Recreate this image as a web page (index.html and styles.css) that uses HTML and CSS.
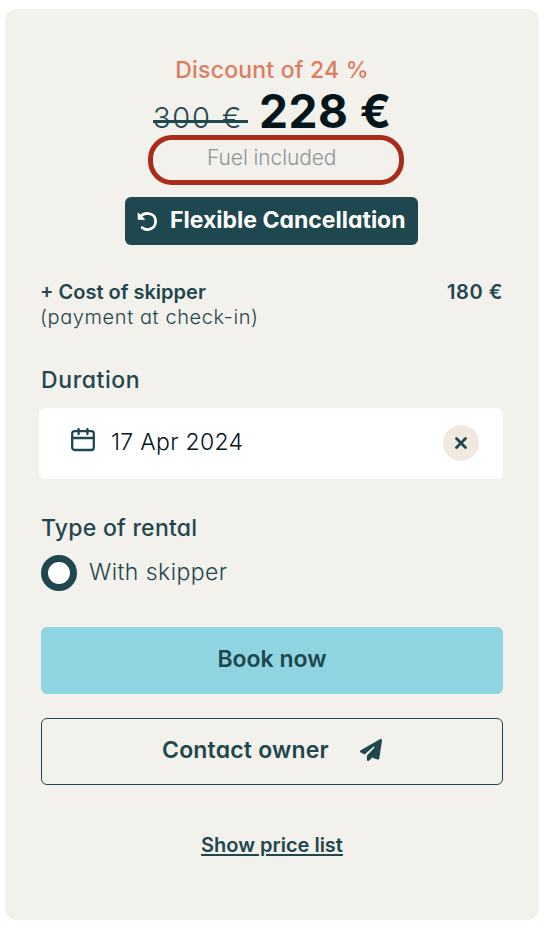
FILE: index.html
```
<!DOCTYPE html>
<html lang="en">
<head>
<meta charset="UTF-8">
<meta name="viewport" content="width=device-width, initial-scale=1.0">
<title>Booking</title>
<link rel="stylesheet" href="styles.css">
</head>
<body>

<div class="booking">
    <div class="discount">Discount of 24 %</div>
    <div class="price">
        <span class="price-old">300 €</span>
        <span class="price-new">228 €</span>
    </div>
    <div class="fuel">Fuel included</div>
    <div class="cancellation">
        <svg width="22" height="22" viewBox="0 0 22 22" fill="none">
            <path d="M4.5 6.4C9 1.4 19.6 2.6 19.6 11.2C19.6 18.6 11.4 22 6.2 17.6" stroke="#fff" stroke-width="2.7" stroke-linecap="round"/>
            <path d="M2.2 2.9v6.4h6.4z" fill="#fff" stroke="#fff" stroke-width="1" stroke-linejoin="round"/>
        </svg>
        <span class="cancellation-text">Flexible Cancellation</span>
    </div>

    <div class="cost">
        <div>
            <div class="cost-name">+ Cost of skipper</div>
            <div class="cost-note">(payment at check-in)</div>
        </div>
        <div class="cost-value">180 €</div>
    </div>

    <div class="label label-duration">Duration</div>
    <div class="date">
        <svg width="24" height="24" viewBox="0 0 24 24" fill="none" stroke="#1f474f" stroke-width="2.3" stroke-linecap="round">
            <rect x="1.2" y="3.2" width="21.6" height="18.8" rx="2.5"/>
            <path d="M1.2 10h21.6M7.6 1v5.2M16.4 1v5.2"/>
        </svg>
        <span class="date-value">17 Apr 2024</span>
        <button class="date-clear" aria-label="Clear">
            <svg width="12" height="12" viewBox="0 0 12 12" stroke="#1f474f" stroke-width="2.8" stroke-linecap="round">
                <path d="M1.5 1.5l9 9M10.5 1.5l-9 9"/>
            </svg>
        </button>
    </div>

    <div class="label label-type">Type of rental</div>
    <div class="radio">
        <span class="radio-mark"></span>
        <span class="radio-text">With skipper</span>
    </div>

    <button class="button button-book">Book now</button>
    <button class="button button-contact">
        <span>Contact owner</span>
        <svg width="22" height="22" viewBox="0 0 512 512" fill="#1f474f">
            <path d="M498 6c10 7 16 18 14 31l-64 416c-2 10-8 18-16 23s-19 6-28 2l-120-50-68 74c-9 10-23 13-36 8s-20-17-20-30v-84c0-4 2-8 4-11l168-183c6-6 5-16 0-22s-15-6-22-1L106 360l-88-44C7 311 0 300 0 288s6-23 16-29L464 3c11-6 24-5 34 3z"/>
        </svg>
    </button>
    <div class="links"><a class="price-list" href="#">Show price list</a></div>
</div>

</body>
</html>
```
FILE: styles.css
```
* {
    box-sizing: border-box;
}

body {
    margin: 0;
    background: #fff;
    color: #1f474f;
    font-family: Inter, "Noto Sans", sans-serif;
    font-feature-settings: "cv11";
    font-size: 23px;
    white-space: nowrap;
}

button {
    padding: 0;
    border: none;
    color: inherit;
    font: inherit;
    font-feature-settings: inherit;
    cursor: pointer;
}

svg {
    display: block;
    flex: none;
}

.booking {
    width: 534px;
    height: 911px;
    margin: 9px 0 0 5px;
    padding: 45px 36px 0;
    background: #f3f1eb;
    border-radius: 12px;
    display: flow-root;
}

.discount {
    line-height: 32px;
    color: #de7c61;
    font-weight: 500;
    letter-spacing: 0.2px;
    text-align: center;
}

.price {
    display: flex;
    align-items: baseline;
    height: 49px;
    padding-left: 112px;
    line-height: 50px;
}

.price-old {
    position: relative;
    width: 95px;
    font-size: 29px;
    font-weight: 300;
    letter-spacing: 1.8px;
}

/* strike runs a little past the amount */
.price-old::after {
    content: "";
    position: absolute;
    left: 0;
    right: 0;
    top: 27px;
    height: 3px;
    background: #1f474f;
}

.price-new {
    margin-left: 11px;
    color: #04151b;
    font-size: 46px;
    font-weight: 700;
    letter-spacing: 0.5px;
}

.fuel {
    width: 256px;
    height: 50px;
    margin-left: 107px;
    padding-left: 54px;
    border: 5px solid #a92b18;
    border-radius: 24px;
    color: #8c9696;
    font-size: 21px;
    font-weight: 300;
    letter-spacing: -0.1px;
    line-height: 36px;
}

.cancellation {
    display: flex;
    align-items: center;
    gap: 12px;
    width: 293px;
    height: 48px;
    margin: 12px 0 0 84px;
    padding-left: 11px;
    border-radius: 6px;
    background: #1f474f;
    color: #fff;
    font-weight: 700;
}

.cancellation-text {
    height: 48px;
    line-height: 47px;
}

.cost {
    display: flex;
    justify-content: space-between;
    margin-top: 34px;
    font-size: 20px;
    line-height: 26px;
}

.cost-name,
.cost-value {
    font-weight: 600;
}

.cost-name {
    margin-left: -1px;
}

.cost-value {
    letter-spacing: 0.6px;
}

.cost-note {
    margin-left: -1px;
    line-height: 25px;
    font-weight: 300;
    letter-spacing: 0.6px;
}

.label {
    font-weight: 500;
    line-height: 30px;
}

.label-duration {
    margin-top: 35px;
    letter-spacing: 0.6px;
}

.date {
    display: flex;
    align-items: center;
    height: 71px;
    margin: 13px 0 0 -2px;
    padding: 0 24px 0 32px;
    border-radius: 6px;
    background: #fff;
}

.date > svg {
    margin-bottom: 7px;
}

.date-value {
    margin-left: 16px;
    padding-bottom: 3px;
    color: #04151b;
    font-weight: 300;
    letter-spacing: 0.3px;
}

.date-clear {
    display: flex;
    align-items: center;
    justify-content: center;
    width: 36px;
    height: 36px;
    margin: 0 0 1px auto;
    border-radius: 50%;
    background: #f1e9df;
}

.label-type {
    margin-top: 34px;
    letter-spacing: 0.25px;
}

.radio {
    display: flex;
    gap: 12px;
    margin-top: 12px;
    font-weight: 300;
    letter-spacing: 0.45px;
    line-height: 34px;
}

.radio-mark {
    width: 36px;
    height: 36px;
    border: 7px solid #1f474f;
    border-radius: 50%;
    background: #fff;
}

.button {
    display: flex;
    justify-content: center;
    width: 462px;
    height: 67px;
    border-radius: 6px;
    font-weight: 600;
    line-height: 64px;
}

.button-book {
    margin-top: 36px;
    background: #8fd5e1;
}

.button-contact {
    justify-content: flex-start;
    align-items: center;
    margin-top: 24px;
    padding: 0 0 3px 120px;
    border: 1px solid #1f474f;
    background: none;
    letter-spacing: 0.2px;
    line-height: 62px;
}

.button-contact svg {
    margin-left: 31px;
}

.links {
    margin-top: 44px;
    text-align: center;
    line-height: 30px;
}

.price-list {
    color: #1f474f;
    font-size: 20px;
    font-weight: 600;
    text-decoration-thickness: 2px;
    text-underline-offset: 2px;
}
```
